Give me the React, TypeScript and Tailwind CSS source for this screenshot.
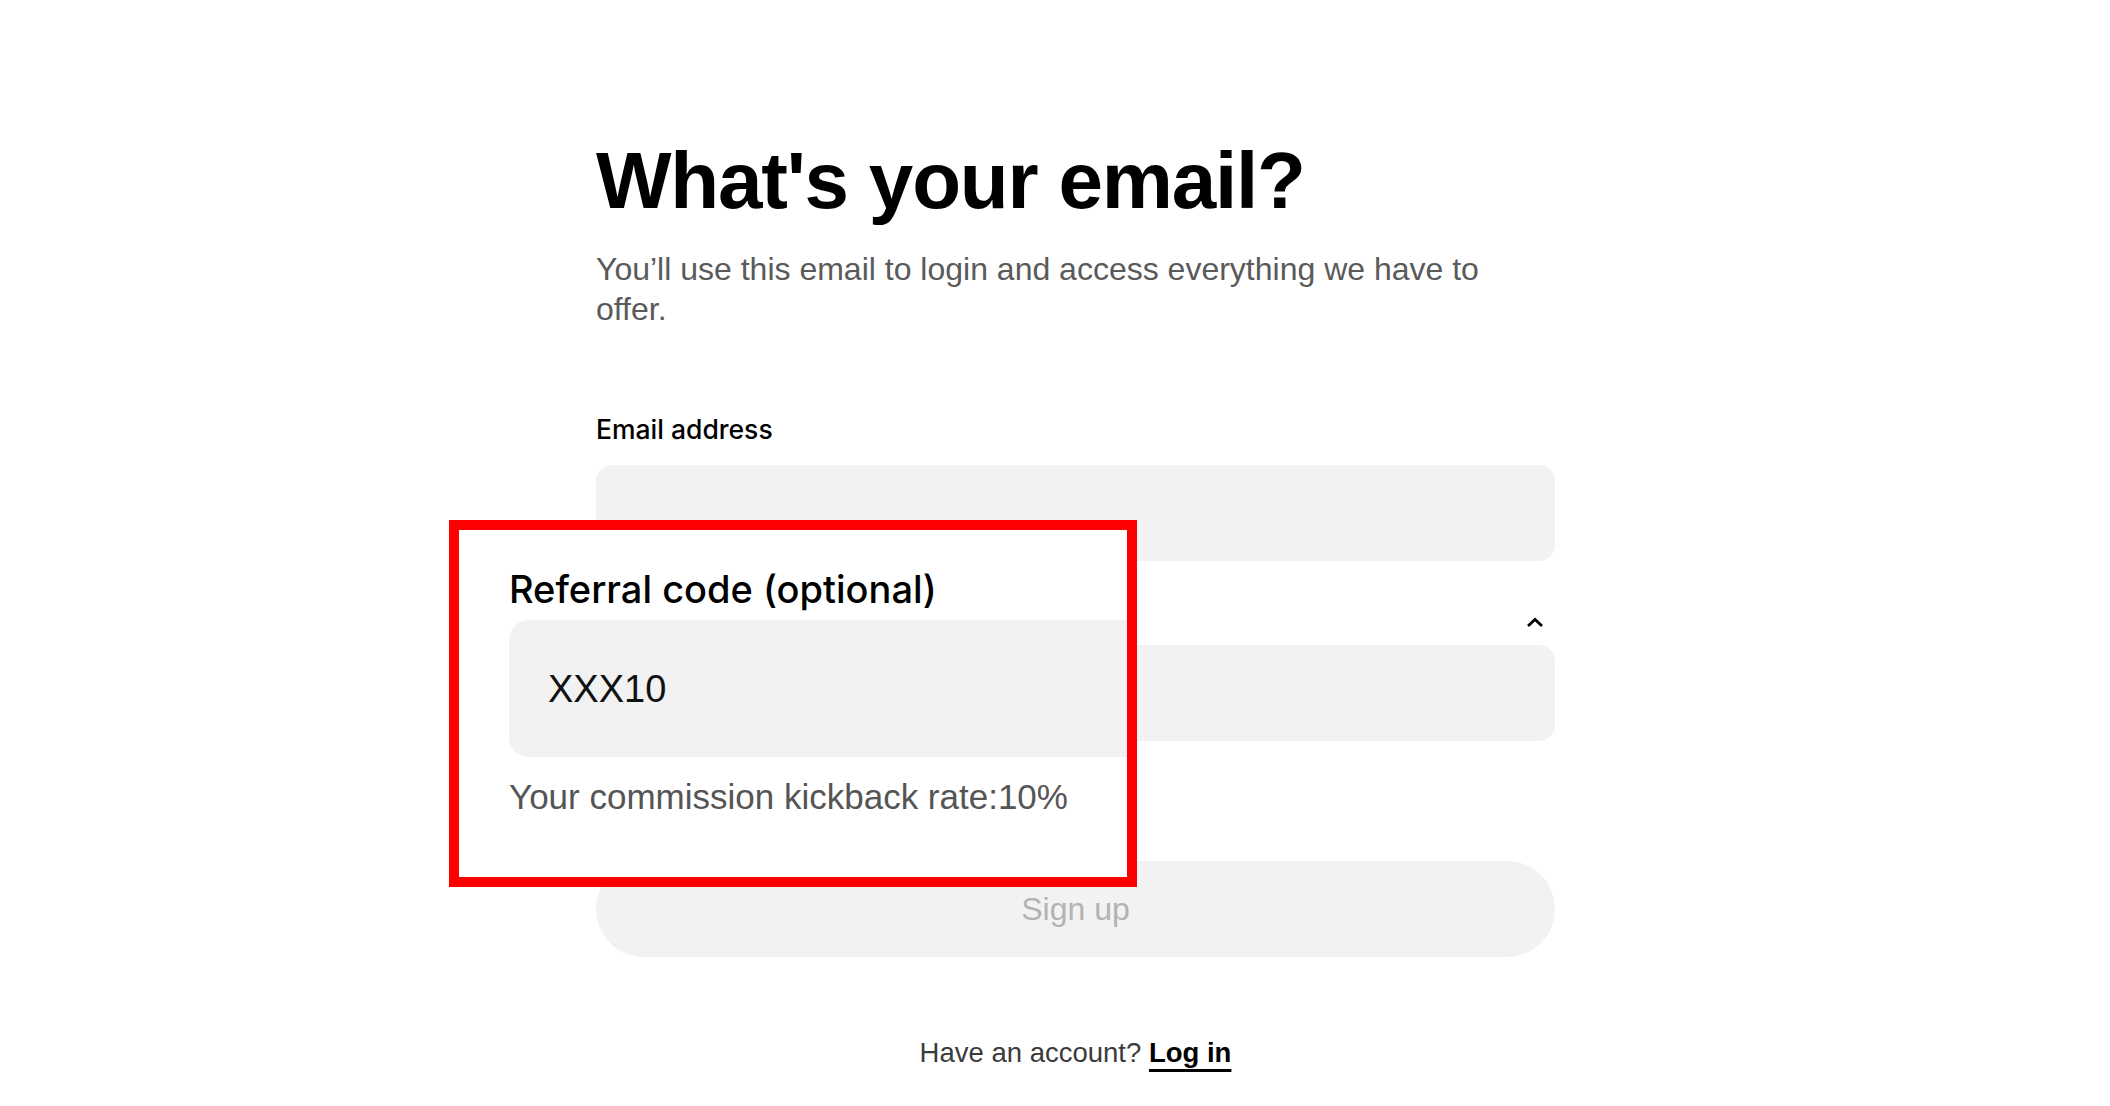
export default function App() {
  return (
    <div className="relative min-h-screen w-full bg-white font-['Liberation_Sans',Arial,sans-serif] text-black">
      {/* main column */}
      <div className="ml-[596px] w-[959px] pt-[141px]">
        <h1 className="text-[80px] font-bold leading-none tracking-[-1.2px]">What's your email?</h1>
        <p className="mt-[28px] max-w-[940px] text-[32px] leading-[40px] text-[#5a5a5a]">
          You’ll use this email to login and access everything we have to offer.
        </p>

        <label className="mt-[84px] block font-['Inter',sans-serif] text-[26.5px] font-medium leading-[32px] text-black">
          Email address
        </label>
        <div className="mt-[20px] h-[96px] rounded-[16px] bg-[#f2f2f2]" />

        <div className="mt-[49px] flex h-[24px] items-center justify-end pr-[11px]">
          <svg width="18" height="11" viewBox="0 0 18 11" fill="none">
            <polyline points="2,9 9,2.5 16,9" stroke="#000" strokeWidth="2.8" />
          </svg>
        </div>
        <div className="mt-[11px] h-[96px] rounded-[16px] bg-[#f2f2f2]" />

        <button className="mt-[120px] flex h-[96px] w-full items-center justify-center rounded-full bg-[#f2f2f2] text-[32px] text-[#b3b3b3]">
          Sign up
        </button>

        <p className="mt-[79px] text-center text-[27.5px] leading-[34px] text-[#3b3b3b]">
          Have an account?{" "}
          <a className="font-bold text-black underline decoration-[3px] underline-offset-[7px]">Log in</a>
        </p>
      </div>

      {/* highlighted overlay */}
      <div className="absolute left-[449px] top-[520px] h-[367px] w-[688px] overflow-hidden border-[10px] border-[#ff0000] bg-white pl-[50px] pt-[36px]">
        <div className="font-['Inter',sans-serif] text-[38px] font-medium leading-[46px] text-black">
          Referral code (optional)
        </div>
        <div className="mt-[8px] flex h-[137px] w-[700px] items-center rounded-[20px] bg-[#f2f2f2] pl-[39px] text-[38px] leading-none text-[#111]">
          XXX10
        </div>
        <div className="mt-[22px] text-[35px] leading-none text-[#555]">Your commission kickback rate:10%</div>
      </div>
    </div>
  );
}
